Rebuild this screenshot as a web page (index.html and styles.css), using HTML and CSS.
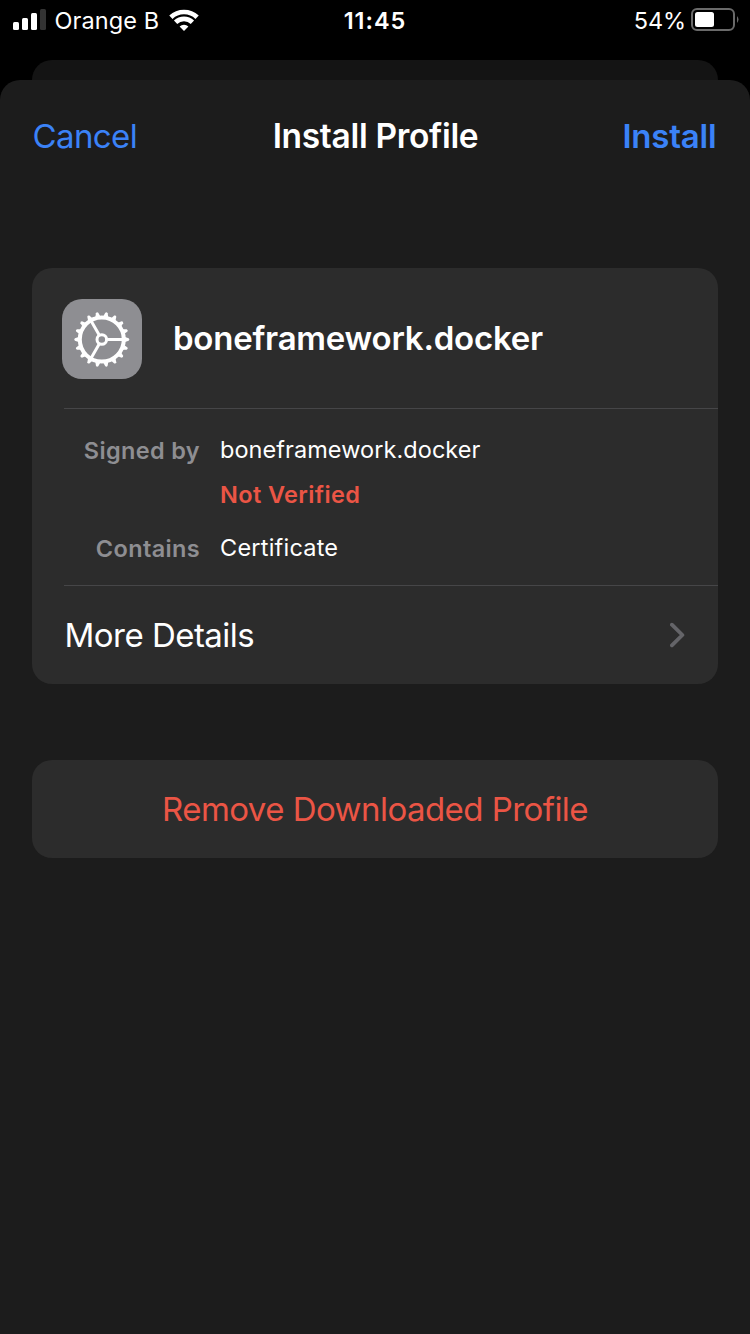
FILE: index.html
```html
<!DOCTYPE html>
<html lang="en">
<head>
<meta charset="utf-8">
<title>Install Profile</title>
<link rel="stylesheet" href="styles.css">
</head>
<body>
<div class="screen">
  <header class="status-bar">
    <div class="status-left">
      <svg class="signal" width="34" height="22" viewBox="0 0 34 22">
        <rect x="0" y="13" width="6" height="8" rx="1.5" fill="#fff"/>
        <rect x="9" y="9" width="6" height="12" rx="1.5" fill="#fff"/>
        <rect x="18" y="4" width="6" height="17" rx="1.5" fill="#fff"/>
        <rect x="27" y="0" width="6" height="21" rx="1.5" fill="#333"/>
      </svg>
      <span class="carrier">Orange B</span>
      <svg class="wifi" width="30" height="22" viewBox="0 0 30 22">
        <g fill="none" stroke="#fff" stroke-width="4.700">
          <path d="M1.900 8.300A18.800 18.800 0 0 1 28.100 8.300"/>
          <path d="M6.600 13.300A12 12 0 0 1 23.400 13.300"/>
        </g>
        <path d="M15 22L10.600 17.600A6.200 6.200 0 0 1 19.400 17.600Z" fill="#fff"/>
      </svg>
    </div>
    <span class="clock">11:45</span>
    <div class="status-right">
      <span class="percent">54%</span>
      <svg class="battery" width="48" height="23" viewBox="0 0 48 23">
        <rect x="1" y="1" width="42" height="21" rx="5" fill="none" stroke="#6a6a6a" stroke-width="2"/>
        <rect x="4" y="4" width="19" height="15" rx="2.5" fill="#fff"/>
        <path d="M46 8Q49 11.500 46 15Z" fill="#6a6a6a"/>
      </svg>
    </div>
  </header>
  <div class="backdrop-card"></div>
  <main class="sheet">
    <nav class="nav">
      <span class="cancel">Cancel</span>
      <h1 class="title">Install Profile</h1>
      <span class="install">Install</span>
    </nav>
    <section class="card profile">
      <div class="profile-head">
        <svg class="gear" width="80" height="80" viewBox="0 0 80 80">
          <defs>
            <path id="tooth" d="M22.500 -2.700L26.900 -1.200Q28.300 0 26.900 1.200L22.500 2.700Z"/>
            <g id="teeth"><use href="#tooth"/><use href="#tooth" transform="rotate(20)"/><use href="#tooth" transform="rotate(40)"/><use href="#tooth" transform="rotate(60)"/><use href="#tooth" transform="rotate(80)"/><use href="#tooth" transform="rotate(100)"/></g>
          </defs>
          <rect width="80" height="80" rx="20" fill="#8e8e92"/>
          <g transform="translate(39.800 40.500)" fill="#fff">
            <use href="#teeth"/><use href="#teeth" transform="rotate(120)"/><use href="#teeth" transform="rotate(240)"/>
            <g fill="none" stroke="#fff">
              <circle r="22" stroke-width="4"/>
              <circle r="4.800" stroke-width="3"/>
              <path d="M5.500 0H21M-2.750 -4.760L-10.500 -18.200M-2.750 4.760L-10.500 18.200" stroke-width="3"/>
            </g>
          </g>
        </svg>
        <h2 class="profile-name">boneframework.docker</h2>
      </div>
      <dl class="facts">
        <dt>Signed by</dt>
        <dd class="signer">boneframework.docker</dd>
        <dd class="unverified">Not Verified</dd>
        <dt class="contains">Contains</dt>
        <dd class="certificate">Certificate</dd>
      </dl>
      <div class="details">
        <span class="details-label">More Details</span>
        <svg width="16" height="26" viewBox="0 0 16 26"><path d="M1.900 2.700L12.400 13L1.900 23.300" fill="none" stroke="#646468" stroke-width="3.800" stroke-linecap="round" stroke-linejoin="round"/></svg>
      </div>
    </section>
    <section class="card remove"><span class="remove-label">Remove Downloaded Profile</span></section>
  </main>
</div>
</body>
</html>
```
FILE: styles.css
```css
* { box-sizing: border-box; margin: 0; padding: 0; }
body { background: #000; font-family: Inter, "Liberation Sans", sans-serif; color: #fff; }
svg { display: block; flex: none; }
h1, h2 { font-weight: 600; }
.screen { width: 750px; height: 1334px; display: flex; flex-direction: column; overflow: hidden; background: #000; white-space: nowrap; }
.status-bar { height: 60px; display: grid; grid-template-columns: 1fr auto 1fr; font-size: 23.5px; line-height: 40px; padding: 1px 11px 0 13px; }
.status-left { display: flex; }
.signal { margin-top: 8px; }
.carrier { margin-left: 7.5px; width: 106px; letter-spacing: 0.1px; }
.wifi { margin: 8px 0 0 8.500px; }
.clock { font-weight: 600; letter-spacing: 0.95px; margin-right: 2px; }
.status-right { display: flex; justify-content: flex-end; }
.percent { letter-spacing: -0.1px; }
.battery { margin: 7px 0 0 5px; }
.backdrop-card { height: 20px; margin: 0 32px; border-radius: 20px 20px 0 0; background: #141414; }
.sheet { flex: 1; background: #1c1c1c; border-radius: 20px 20px 0 0; padding: 0 32px; }
.nav { height: 188px; padding-top: 36px; display: grid; grid-template-columns: 1fr auto 1fr; font-size: 33px; line-height: 40px; }
.title { font-size: 33.5px; letter-spacing: -0.32px; padding-left: 1px; }
.cancel, .install { color: #3b82f7; }
.cancel { letter-spacing: -0.6px; padding-left: 0.5px; }
.install { text-align: right; font-weight: 600; letter-spacing: -0.2px; padding-right: 1.5px; }
.card { background: #2c2c2c; border-radius: 20px; }
.profile { height: 416px; }
.profile-head { height: 140px; padding: 31px 0 0 30px; display: flex; gap: 31px; }
.profile-name { font-size: 33px; line-height: 78px; letter-spacing: -0.23px; }
.facts { height: 178px; margin-left: 32px; border: solid #464648; border-width: 1px 0; padding-top: 21px; display: grid; grid-template-columns: 136px 1fr; grid-template-rows: 45px 53px 45px; column-gap: 20px; font-size: 23.5px; line-height: 40px; }
dt { color: #8e8e92; font-weight: 600; text-align: right; padding-top: 1px; letter-spacing: 0.35px; }
.signer { letter-spacing: 0.06px; }
.unverified { grid-column: 2; color: #eb5545; font-weight: 600; letter-spacing: 0.38px; }
.certificate { letter-spacing: 0.22px; }
.details { height: 98px; display: flex; align-items: center; justify-content: space-between; padding: 0 32px; font-size: 33px; }
.details-label { letter-spacing: -0.52px; padding-left: 0.5px; }
.remove { margin-top: 76px; height: 98px; display: flex; align-items: center; justify-content: center; color: #eb5545; font-size: 33px; }
.remove-label { letter-spacing: -0.55px; }
```
